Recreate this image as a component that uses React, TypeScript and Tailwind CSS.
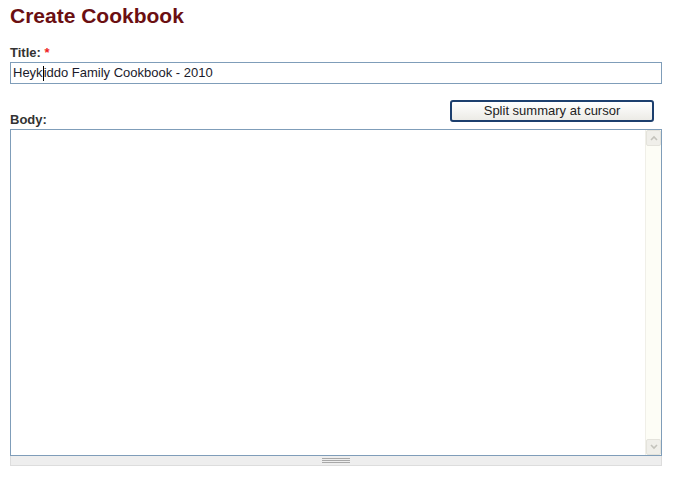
import * as React from 'react';

const App: React.FC = () => {
  return (
    <div className="w-[673px] h-[480px] bg-white px-[10px] pt-[3px] font-['Liberation_Sans',Arial,sans-serif] text-[#333]">
      <h1 className="text-[21px] leading-[25px] font-bold text-[#6b0f12]">Create Cookbook</h1>

      <div className="mt-[17px]">
        <label className="block text-[13px] leading-[15px] font-bold text-[#333]">
          Title: <span className="text-[#e22]">*</span>
        </label>
        <div className="mt-[2px] w-[652px] h-[22px] border border-[#7f9db9] flex items-center pl-[2px] text-[13px] text-[#1a1a2a]">
          <span>Heyk</span>
          <span className="inline-block w-px h-[15px] bg-[#000]"></span>
          <span>iddo Family Cookbook - 2010</span>
        </div>
      </div>

      <div className="mt-[16px] flex items-end justify-between w-[652px]">
        <label className="text-[13px] leading-[15px] font-bold text-[#333] mb-[2px]">Body:</label>
        <button className="mr-[8px] mb-[7px] w-[204px] h-[22px] rounded-[3px] border-2 border-[#1c3f6e] bg-gradient-to-b from-[#ffffff] to-[#ecebe6] text-[13px] text-[#222] flex items-center justify-center">
          Split summary at cursor
        </button>
      </div>

      <div className="w-[652px]">
        <div className="h-[327px] border border-[#7f9db9] flex">
          <div className="flex-1"></div>
          <div className="w-[16px] bg-[#fdfdf6] border-l border-[#f0efe8] flex flex-col justify-between">
            <div className="h-[16px] bg-[#f0efea] border border-[#e4e3dc] rounded-[2px] flex items-center justify-center">
              <svg width="8" height="6" viewBox="0 0 8 6"><path d="M1 5 L4 2 L7 5" stroke="#c4c3bc" strokeWidth="1.6" fill="none" /></svg>
            </div>
            <div className="h-[16px] bg-[#f0efea] border border-[#e4e3dc] rounded-[2px] flex items-center justify-center">
              <svg width="8" height="6" viewBox="0 0 8 6"><path d="M1 1 L4 4 L7 1" stroke="#c4c3bc" strokeWidth="1.6" fill="none" /></svg>
            </div>
          </div>
        </div>
        <div className="h-[10px] bg-[#eeeeee] border border-t-0 border-[#dddddd] flex items-center justify-center">
          <div className="w-[28px] flex flex-col gap-[1px]">
            <div className="h-px bg-[#a8a8a8]"></div>
            <div className="h-px bg-[#a8a8a8]"></div>
            <div className="h-px bg-[#a8a8a8]"></div>
          </div>
        </div>
      </div>
    </div>
  );
};

export default App;
